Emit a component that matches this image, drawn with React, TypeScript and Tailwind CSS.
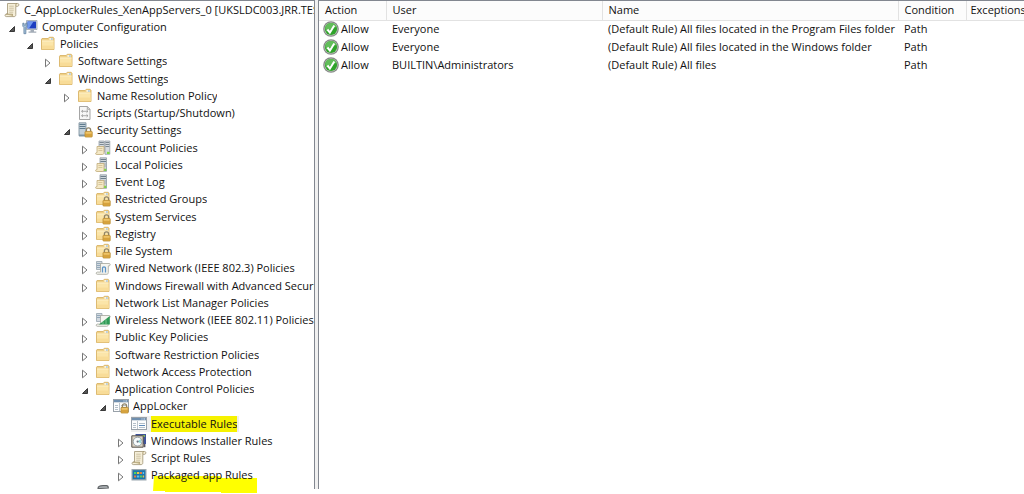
import { useState } from "react";
import type { ReactNode } from "react";
import clsx from "clsx";

type IconName =
  | "scroll"
  | "computer"
  | "folder"
  | "script"
  | "security"
  | "servers"
  | "server"
  | "lockedFolder"
  | "wired"
  | "wireless"
  | "appLocker"
  | "table"
  | "installer"
  | "packaged"
  | "gear";

type TreeItem = {
  label: string;
  level: number;
  icon: IconName;
  state?: "open" | "closed";
  mark?: "text" | "under";
};

const TREE: TreeItem[] = [
  {
    label: "C_AppLockerRules_XenAppServers_0 [UKSLDC003.JRR.TEST]",
    level: 0,
    icon: "scroll",
  },
  { label: "Computer Configuration", level: 1, icon: "computer", state: "open" },
  { label: "Policies", level: 2, icon: "folder", state: "open" },
  { label: "Software Settings", level: 3, icon: "folder", state: "closed" },
  { label: "Windows Settings", level: 3, icon: "folder", state: "open" },
  { label: "Name Resolution Policy", level: 4, icon: "folder", state: "closed" },
  { label: "Scripts (Startup/Shutdown)", level: 4, icon: "script" },
  { label: "Security Settings", level: 4, icon: "security", state: "open" },
  { label: "Account Policies", level: 5, icon: "servers", state: "closed" },
  { label: "Local Policies", level: 5, icon: "server", state: "closed" },
  { label: "Event Log", level: 5, icon: "server", state: "closed" },
  { label: "Restricted Groups", level: 5, icon: "lockedFolder", state: "closed" },
  { label: "System Services", level: 5, icon: "lockedFolder", state: "closed" },
  { label: "Registry", level: 5, icon: "lockedFolder", state: "closed" },
  { label: "File System", level: 5, icon: "lockedFolder", state: "closed" },
  {
    label: "Wired Network (IEEE 802.3) Policies",
    level: 5,
    icon: "wired",
    state: "closed",
  },
  {
    label: "Windows Firewall with Advanced Security",
    level: 5,
    icon: "folder",
    state: "closed",
  },
  { label: "Network List Manager Policies", level: 5, icon: "folder" },
  {
    label: "Wireless Network (IEEE 802.11) Policies",
    level: 5,
    icon: "wireless",
    state: "closed",
  },
  { label: "Public Key Policies", level: 5, icon: "folder", state: "closed" },
  {
    label: "Software Restriction Policies",
    level: 5,
    icon: "folder",
    state: "closed",
  },
  {
    label: "Network Access Protection",
    level: 5,
    icon: "folder",
    state: "closed",
  },
  {
    label: "Application Control Policies",
    level: 5,
    icon: "folder",
    state: "open",
  },
  { label: "AppLocker", level: 6, icon: "appLocker", state: "open" },
  { label: "Executable Rules", level: 7, icon: "table", mark: "text" },
  {
    label: "Windows Installer Rules",
    level: 7,
    icon: "installer",
    state: "closed",
  },
  { label: "Script Rules", level: 7, icon: "scroll", state: "closed" },
  {
    label: "Packaged app Rules",
    level: 7,
    icon: "packaged",
    state: "closed",
    mark: "under",
  },
];

const INDENT = [
  "pl-1",
  "pl-2",
  "pl-[26px]",
  "pl-[44px]",
  "pl-[63px]",
  "pl-[81px]",
  "pl-[99px]",
  "pl-[117px]",
];

const RULES = [
  {
    user: "Everyone",
    name: "(Default Rule) All files located in the Program Files folder",
  },
  {
    user: "Everyone",
    name: "(Default Rule) All files located in the Windows folder",
  },
  { user: "BUILTIN\\Administrators", name: "(Default Rule) All files" },
];

const COLUMNS = [
  { title: "Action", width: "w-[67px]" },
  { title: "User", width: "w-[216px]" },
  { title: "Name", width: "w-[296px]" },
  { title: "Condition", width: "w-[68px]" },
  { title: "Exceptions", width: "" },
];

const padlock = (
  <>
    <path
      d="M9.4 9.6V8a2.1 2.1 0 0 1 4.2 0v1.6"
      fill="none"
      stroke="#8f8468"
      strokeWidth="1.3"
    />
    <rect x="8" y="9.4" width="7.2" height="5.6" rx=".6" fill="#e3b04a" stroke="#b98a2e" strokeWidth=".8" />
    <path d="M8.6 10.9h6" stroke="#f5d284" strokeWidth=".9" />
    <path d="M8.6 13h6" stroke="#c4902f" strokeWidth=".8" />
  </>
);

const folder = (
  <>
    <path
      d="M1.5 3.2 2 2.5h6.2l1-1.2h4l.8.9v11.3H1.5z"
      fill="#efd187"
      stroke="#d9b468"
      strokeWidth=".9"
    />
    <path d="M9.4 2.2h3.6v1.5H9.4z" fill="#fdfdf7" />
    <path d="M11 2.5h1.8v1H11z" fill="#7fb0dc" />
    <path d="M2 4.7h11.6v8.4H2z" fill="#fbe5a9" />
    <path d="M2 5h11.6" stroke="#fff5d3" strokeWidth=".8" />
    <path d="M2 9.5h11.6v3.6H2z" fill="#f8dc98" />
  </>
);

const paper = (
  <>
    <path
      d="M3.5 1.5h10.2c1.6 0 1.6 2.6 0 2.8h-1.9v8.4c0 1.4-.8 1.9-1.8 1.9H2.2c-1.5 0-1.6-2.4 0-2.6h1.3z"
      fill="#f6efd9"
      stroke="#a89d80"
      strokeWidth=".9"
    />
    <path
      d="M2 12.2h6.7c-.7.8-.5 1.9.4 2.3"
      fill="#dccfa6"
      stroke="#a39265"
      strokeWidth=".8"
    />
    <path d="M11.8 4.2V2.6c0-.6.6-1 1.2-1" fill="none" stroke="#a39265" strokeWidth=".8" />
    <path
      d="M5.2 4.2h4.6M5.2 6.2h4.6M5.2 8.2h4.6M5.2 10.2h4"
      stroke="#c3b797"
      strokeWidth=".8"
    />
  </>
);

const windowTable = (
  <>
    <rect x=".5" y="1.5" width="15" height="12" fill="#fdfdfd" stroke="#99a1a9" />
    <path d="M1 2h14v2H1z" fill="#6f8faf" />
    <path d="M10.5 3h1M12.5 3h1.5" stroke="#dce8f2" />
    <path d="M1 4.5h14" stroke="#d3dbe2" />
    <path d="M6.5 5v8" stroke="#bcc4cb" />
    <path d="M2 7.5h3M2 9.5h3M2 11.5h3" stroke="#b4bfc9" />
    <path d="M8 7.5h6M8 11.5h6" stroke="#b4bfc9" />
    <path d="M8 9.5h6" stroke="#5f8bb8" />
  </>
);

const smallScroll = (
  <>
    <path
      d="M2 6.5h7v6.3c0 1-.6 1.7-1.5 1.7h-6c-1.2 0-1.1-1.8 0-1.9H2z"
      fill="#f4e8c6"
      stroke="#c0ab78"
      strokeWidth=".8"
    />
    <path d="M3.4 8.5h4M3.4 10.5h4" stroke="#cfbd8e" strokeWidth=".8" />
  </>
);

const ICONS: Record<IconName, ReactNode> = {
  scroll: paper,
  folder,
  computer: (
    <>
      <path d="M4.5 1.5H15v9H4.5z" fill="#d5dbe3" stroke="#9aa4b0" strokeWidth=".8" />
      <path d="M5.5 2.5H14v7H5.5z" fill="#1c3dc0" />
      <path d="M5.5 2.5h6L7 9.5H5.5z" fill="#6f97ee" />
      <path d="M8.5 11h3.5v1.5h2.3v1.2H6.5v-1.2h2z" fill="#a3acb7" />
      <path
        d="M.8 4.2h1.3v2h1.6v-2H5v3L3.9 8.5v6.2h-2V8.5L.8 7.2z"
        fill="#a4c0d8"
        stroke="#577a9b"
        strokeWidth=".7"
      />
    </>
  ),
  script: (
    <>
      <path d="M2.5 1.5h8L13 4.1v10.4H2.5z" fill="#f7f7f7" stroke="#9b9b9b" strokeWidth=".9" />
      <path d="M10.3 1.5v2.8H13" fill="#ddd" stroke="#9b9b9b" strokeWidth=".8" />
      <path
        d="M6 5 4.5 6.3 6 7.6M9.5 5 11 6.3 9.5 7.6M4.8 6.3h6M6 9.4l-1.5 1.3L6 12M9.5 9.4l1.5 1.3L9.5 12M4.8 10.7h6"
        fill="none"
        stroke="#8b8b8b"
        strokeWidth=".7"
      />
    </>
  ),
  security: (
    <>
      <path d="M2 .8h7v13H2z" fill="#c3d0d9" stroke="#8496a3" strokeWidth=".9" />
      <path d="M2.5 2.5h6M2.5 4.5h6M2.5 6.5h6" stroke="#5f7b8e" />
      <path d="M2 12.5h7v1.8H2z" fill="#7d95a5" />
      {padlock}
    </>
  ),
  servers: (
    <>
      <path d="M4 1h5.3v11H4zM10 1h4.8v13.3H10z" fill="#d6dbdf" stroke="#97a1a9" strokeWidth=".8" />
      <path d="M4.5 2.5h4.3M4.5 4.5h4.3M10.5 2.5h3.8M10.5 4.5h3.8M10.5 6.5h3.8" stroke="#7c8992" />
      <path d="M12 11.8h2.6V14H12z" fill="#7ed943" />
      {smallScroll}
    </>
  ),
  server: (
    <>
      <path d="M5 .8h6.5v13.5H5z" fill="#cfd5da" stroke="#8f9aa2" strokeWidth=".8" />
      <path d="M5.5 2.5h5.5M5.5 4.5h5.5" stroke="#6e7f8b" />
      <path d="M9.2 7h2M9.2 9h2" stroke="#9ba7b0" />
      <path d="M9 11.8h2.3V14H9z" fill="#7ed943" />
      {smallScroll}
    </>
  ),
  lockedFolder: (
    <>
      {folder}
      {padlock}
    </>
  ),
  wired: (
    <>
      <path d="M1.5 1.5h5.5v8H1.5z" fill="#d3dae0" stroke="#96a3ad" strokeWidth=".8" />
      <path d="M2 3.5h4.5M2 5.5h4.5M2 7.5h4.5" stroke="#839bb0" strokeWidth=".8" />
      <path
        d="M5.5 3.5h8.6c1.5 0 1.5 2.2 0 2.4h-.8v6.6c0 1.2-.7 1.8-1.6 1.8H2.2c-1.3 0-1.3-2 0-2.2h3.3z"
        fill="#f5f5ef"
        stroke="#a3a49b"
        strokeWidth=".8"
      />
      <path d="M7.5 12.5V7.8c0-1.2 3-1.2 3 0v4.7" fill="none" stroke="#5c93c6" strokeWidth="1.3" />
    </>
  ),
  wireless: (
    <>
      <path d="M1.5 1.5h5.5v8H1.5z" fill="#d3dae0" stroke="#96a3ad" strokeWidth=".8" />
      <path d="M2 3.5h4.5M2 5.5h4.5" stroke="#839bb0" strokeWidth=".8" />
      <path
        d="M5.5 3.5h8.6c1.5 0 1.5 2.2 0 2.4h-.8v6.6c0 1.2-.7 1.8-1.6 1.8H2.2c-1.3 0-1.3-2 0-2.2h3.3z"
        fill="#f5f5ef"
        stroke="#a3a49b"
        strokeWidth=".8"
      />
      <path d="M4 12.5 14.8 4v8.5z" fill="#2f9a55" />
      <path d="M8 9.7v2.8M11 7.5v5" stroke="#9bd5aa" strokeWidth=".7" />
    </>
  ),
  appLocker: (
    <>
      {windowTable}
      {padlock}
    </>
  ),
  table: windowTable,
  installer: (
    <>
      <path d="M4.5 1H15v10H4.5z" fill="#3f5299" />
      <path d="M11 2h3v2h-3z" fill="#7cb45e" />
      <path d="M.8 2.8h11.4v11.4H.8z" fill="#dcd3c3" stroke="#55504b" />
      <circle cx="6.6" cy="8.6" r="4.4" fill="#f7fbfc" stroke="#8b979f" strokeWidth=".9" />
      <path d="M6.6 8.6 9.9 6v4.6z" fill="#8fd3d4" />
      <circle cx="6.6" cy="8.6" r="1.1" fill="#6a7280" />
      <path d="M12.8 11v3.2h1.6V11z" fill="#5b5a63" />
    </>
  ),
  packaged: (
    <>
      <path d="M.5 2h15v11.5H.5z" fill="#9ba7ae" />
      <path d="M1.7 3.2h12.6v9H1.7z" fill="#1b74ad" />
      <path d="M3 5h2.3v2H3zM9 8.4h2v2H9z" fill="#56cf5c" />
      <path d="M6 5h2.3v2H6zM11.7 8.4h1.4v2h-1.4z" fill="#eec344" />
      <path d="M9 5h2v2H9zM3 8.4h2.3v2H3z" fill="#e87b40" />
      <path d="M11.7 5h1.4v2h-1.4zM6 8.4h2.3v2H6z" fill="#5cc3ec" />
    </>
  ),
  gear: (
    <path
      d="M3 4.5c0-2 2-2.8 5-2.8h3.5c1.2 0 1.8.8 1.8 2.3z"
      fill="#b5babe"
      stroke="#5f6366"
      strokeWidth="1.2"
    />
  ),
};

const Icon = ({ name }: { name: IconName }) => (
  <svg viewBox="0 0 16 16" className="size-4 shrink-0" aria-hidden="true">
    {ICONS[name]}
  </svg>
);

const AllowIcon = () => (
  <svg viewBox="0 0 16 16" className="size-4 shrink-0" aria-hidden="true">
    <circle cx="8" cy="8" r="7.8" fill="#858986" />
    <circle cx="8" cy="8" r="6.6" fill="#c3cdc2" />
    <circle cx="8" cy="8" r="6.1" fill="#2fa32a" />
    <path d="M2.2 7.2a5.9 5.9 0 0 1 11.4-1.3C10.5 6 7 8.5 3.4 10.6z" fill="#62bd5a" />
    <path d="m4.4 8.5 2.5 3 4.4-7" fill="none" stroke="#fff" strokeWidth="2" />
  </svg>
);

const Arrow = ({ open }: { open: boolean }) => (
  <svg viewBox="0 0 8 10" className="h-2.5 w-2" aria-hidden="true">
    {open ? (
      <path d="M6.5 2.5v5h-5z" fill="#555" stroke="#2b2b2b" strokeWidth=".9" />
    ) : (
      <path d="M1.5 1.2v7.6L6 5z" fill="#fff" stroke="#777" />
    )}
  </svg>
);

const TreeRow = ({
  item,
  onToggle,
}: {
  item: TreeItem;
  onToggle: () => void;
}) => (
  <li
    className={clsx(
      "relative flex h-[17px] items-center nth-[4n]:h-[18px]",
      INDENT[item.level],
    )}
  >
    {item.level > 0 && (
      <span className="flex w-3.5 shrink-0">
        {item.state && (
          <button
            type="button"
            onClick={onToggle}
            aria-label={`Toggle ${item.label}`}
            aria-expanded={item.state === "open"}
            className="pt-1"
          >
            <Arrow open={item.state === "open"} />
          </button>
        )}
      </span>
    )}
    {item.mark === "under" && (
      <svg
        viewBox="0 0 104 17"
        className="absolute top-2.5 left-[153px] h-[17px] w-[104px]"
        aria-hidden="true"
      >
        <path d="M1 0h66l2 2h35v15H68v-1H12v-1H0z" fill="#ff0" />
      </svg>
    )}
    <span
      className={clsx(
        "relative flex min-w-0 items-center gap-1 overflow-hidden",
        item.mark === "text" && "bg-[#efefef] pr-0.5",
      )}
    >
      <Icon name={item.icon} />
      <span
        className={clsx(
          "min-w-0 overflow-hidden leading-4 whitespace-nowrap",
          item.mark === "text" && "bg-[#f6f200]",
        )}
      >
        {item.label}
      </span>
    </span>
  </li>
);

const PolicyTree = () => {
  const [items, setItems] = useState(TREE);

  const toggle = (index: number) => {
    setItems((prev) =>
      prev.map((item, i) =>
        i === index
          ? { ...item, state: item.state === "open" ? "closed" : "open" }
          : item,
      ),
    );
  };

  return (
    <nav
      aria-label="Group policy"
      className="w-[315px] shrink-0 border-t border-r border-[#828790]"
    >
      <ul>
        {items.map((item, index) => (
          <TreeRow
            key={item.label}
            item={item}
            onToggle={() => toggle(index)}
          />
        ))}
        <li className="h-[5px] overflow-hidden pl-[95px]">
          <Icon name="gear" />
        </li>
      </ul>
    </nav>
  );
};

const RuleTable = () => (
  <section className="min-w-0 flex-1 overflow-hidden border-t border-l border-[#828790]">
    <table className="w-full table-fixed border-collapse text-left">
      <thead>
        <tr className="h-[19px] bg-[#fcfcfc]">
          {COLUMNS.map((column) => (
            <th
              key={column.title}
              className={clsx(
                "border-r border-b border-[#e2e2e2] p-0 pl-1.5 font-normal whitespace-nowrap last:border-r-0 last:pl-1",
                column.width,
              )}
            >
              {column.title}
            </th>
          ))}
        </tr>
      </thead>
      <tbody>
        {RULES.map((rule) => (
          <tr key={rule.name} className="h-[18px] whitespace-nowrap">
            <td className="p-0 pl-1">
              <span className="flex items-center gap-0.5">
                <AllowIcon />
                Allow
              </span>
            </td>
            <td className="p-0 pl-1.5">{rule.user}</td>
            <td className="p-0 pl-1.5">{rule.name}</td>
            <td className="p-0 pl-1.5">Path</td>
            <td className="p-0" />
          </tr>
        ))}
      </tbody>
    </table>
  </section>
);

const App = () => {
  return (
    <main className="flex min-h-screen bg-white pb-[5px] font-['Open_Sans','Noto_Sans',sans-serif] text-[11px] leading-4 text-[#111]">
      <PolicyTree />
      <div className="w-[3px] shrink-0 bg-[#f0f0f0]" />
      <RuleTable />
    </main>
  );
};

export default App;
